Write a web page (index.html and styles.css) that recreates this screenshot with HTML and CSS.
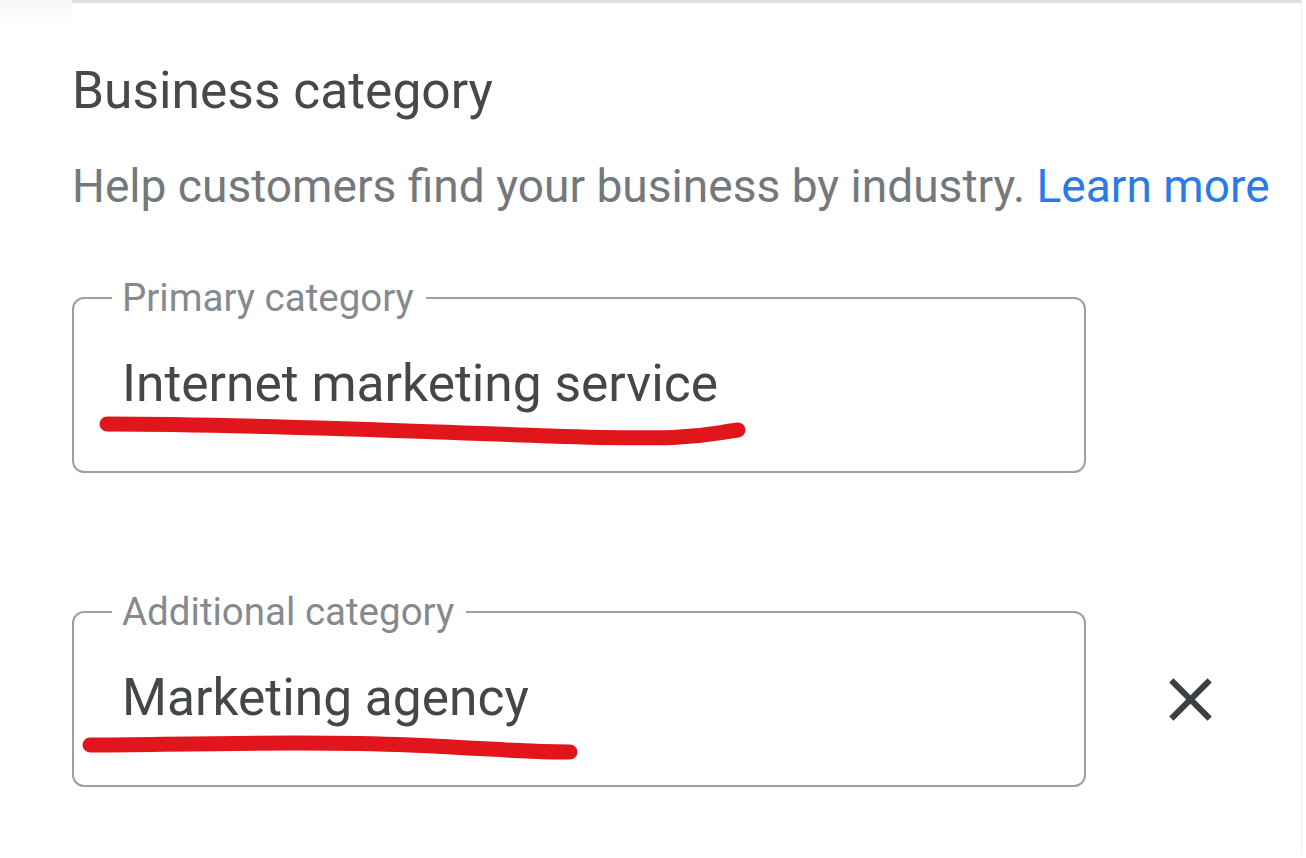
FILE: index.html
```html
<!DOCTYPE html>
<html lang="en">
<head>
<meta charset="utf-8">
<title>Business category</title>
<link rel="stylesheet" href="styles.css">
</head>
<body>
<div class="page">
  <section class="panel">
    <h2 class="title">Business category</h2>
    <p class="help">Help customers find your business by industry. <a class="link" href="#">Learn more</a></p>
    <div class="row row-first">
      <fieldset class="field">
        <legend class="label">Primary category</legend>
        <div class="value">Internet marketing service</div>
      </fieldset>
    </div>
    <div class="row row-second">
      <fieldset class="field">
        <legend class="label">Additional category</legend>
        <div class="value">Marketing agency</div>
      </fieldset>
      <button class="remove" type="button" aria-label="Remove category">
        <svg viewBox="0 0 24 24" width="73" height="73"><path d="M19 6.41L17.59 5 12 10.59 6.41 5 5 6.41 10.59 12 5 17.59 6.41 19 12 13.41 17.59 19 19 17.59 13.41 12z" fill="currentColor"/></svg>
      </button>
    </div>
  </section>
  <svg class="marks" width="1306" height="858" viewBox="0 0 1306 858" aria-hidden="true">
    <path d="M107 424 C 250 424, 400 431, 550 436 S 700 435, 738 430" />
    <path d="M90 745 C 200 744, 320 741, 410 745 S 520 752, 570 752" />
  </svg>
</div>
</body>
</html>
```
FILE: styles.css
```css
html, body {
  margin: 0;
  padding: 0;
  background: #ffffff;
}

body {
  font-family: Roboto, "Noto Sans", "Liberation Sans", sans-serif;
  color: #3c4043;
}

.page {
  position: relative;
  width: 1306px;
  height: 858px;
  overflow: hidden;
  background: linear-gradient(to bottom, #f6f6f6 0, #ffffff 30px) no-repeat;
  background-size: 72px 40px;
}

.panel {
  margin-left: 72px;
  width: 1230px;
  height: 855px;
  box-sizing: border-box;
  border-top: 3px solid #dfdfdf;
  border-right: 1px solid #eef0f2;
  background: #ffffff;
  padding-top: 58px;
}

.title {
  margin: 0;
  font-size: 51.5px;
  line-height: 60px;
  font-weight: 400;
  color: #46494c;
}

.help {
  margin: 38px 0 0;
  font-size: 46.1px;
  line-height: 54px;
  color: #74787c;
  white-space: nowrap;
}

.link {
  color: #2a7be6;
  text-decoration: none;
}

.row {
  display: flex;
  align-items: center;
}

.row-first {
  margin-top: 65px;
}

.row-second {
  margin-top: 119px;
}

.field {
  width: 1014px;
  box-sizing: border-box;
  margin: 0;
  padding: 0 0 0 48px;
  border: 2px solid #9aa0a6;
  border-radius: 12px;
  min-width: 0;
}

.label {
  padding: 0 12px 0 10px;
  margin-left: -10px;
  font-size: 38.5px;
  line-height: 40px;
  color: #868a8e;
}

.value {
  margin-top: 36px;
  padding-bottom: 57px;
  font-size: 51.5px;
  line-height: 60px;
  color: #44474a;
  white-space: nowrap;
}

.remove {
  margin: 20px 0 0 67px;
  padding: 0;
  width: 75px;
  height: 75px;
  border: 0;
  background: transparent;
  color: #3c4043;
  display: flex;
  align-items: center;
  justify-content: center;
}

.remove svg {
  display: block;
}

.marks {
  position: absolute;
  left: 0;
  top: 0;
  pointer-events: none;
}

.marks path {
  fill: none;
  stroke: #e1161c;
  stroke-width: 15;
  stroke-linecap: round;
  stroke-linejoin: round;
}
```
